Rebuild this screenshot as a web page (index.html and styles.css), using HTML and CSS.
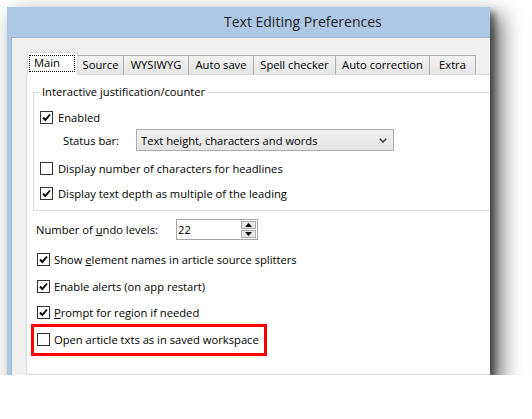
FILE: index.html
```html
<!DOCTYPE html>
<html>
<head>
<meta charset="utf-8">
<title>Text Editing Preferences</title>
<link rel="stylesheet" href="styles.css">
</head>
<body>
<div class="window">
  <div class="titlebar">Text Editing Preferences</div>
  <div class="client">
    <div class="tabs">
      <div class="tab tab-main"><span class="focus">Main</span></div>
      <div class="tab tab-source">Source</div>
      <div class="tab tab-wysiwyg">WYSIWYG</div>
      <div class="tab tab-autosave">Auto save</div>
      <div class="tab tab-spell">Spell checker</div>
      <div class="tab tab-autocorr">Auto correction</div>
      <div class="tab tab-extra">Extra</div>
    </div>
    <div class="panel">
      <fieldset class="group">
        <legend>Interactive justification/counter</legend>
        <div class="check row-enabled">
          <span class="box"><svg viewBox="0 0 11 11" width="11" height="11"><path d="M2 5.5 L4.3 8 L9 2.5" fill="none" stroke="#000" stroke-width="1.9"/></svg></span>
          <span>Enabled</span>
        </div>
        <div class="status-row">
          <span class="status-label">Status bar:</span>
          <div class="select">
            <span class="select-text">Text height, characters and words</span>
            <svg class="chevron" viewBox="0 0 8 5" width="8" height="5"><path d="M0.8 0.8 L4 4 L7.2 0.8" fill="none" stroke="#444" stroke-width="1.6"/></svg>
          </div>
        </div>
        <div class="check row-headlines">
          <span class="box"></span>
          <span>Display number of characters for headlines</span>
        </div>
        <div class="check row-depth">
          <span class="box"><svg viewBox="0 0 11 11" width="11" height="11"><path d="M2 5.5 L4.3 8 L9 2.5" fill="none" stroke="#000" stroke-width="1.9"/></svg></span>
          <span>Display text depth as multiple of the leading</span>
        </div>
      </fieldset>

      <div class="undo-row">
        <span class="undo-label">Number of <u>u</u>ndo levels:</span>
        <div class="spin">
          <span class="spin-value">22</span>
          <div class="spin-buttons">
            <span class="spin-btn"><svg viewBox="0 0 7 4" width="7" height="4"><path d="M0 4 L3.5 0 L7 4 Z" fill="#000"/></svg></span>
            <span class="spin-btn"><svg viewBox="0 0 7 4" width="7" height="4"><path d="M0 0 L3.5 4 L7 0 Z" fill="#000"/></svg></span>
          </div>
        </div>
      </div>

      <div class="check check-outer row-element">
        <span class="box"><svg viewBox="0 0 11 11" width="11" height="11"><path d="M2 5.5 L4.3 8 L9 2.5" fill="none" stroke="#000" stroke-width="1.9"/></svg></span>
        <span>Show <u>e</u>lement names in article source splitters</span>
      </div>
      <div class="check check-outer row-alerts">
        <span class="box"><svg viewBox="0 0 11 11" width="11" height="11"><path d="M2 5.5 L4.3 8 L9 2.5" fill="none" stroke="#000" stroke-width="1.9"/></svg></span>
        <span>Enable alerts (on app restart)</span>
      </div>
      <div class="check check-outer row-prompt">
        <span class="box"><svg viewBox="0 0 11 11" width="11" height="11"><path d="M2 5.5 L4.3 8 L9 2.5" fill="none" stroke="#000" stroke-width="1.9"/></svg></span>
        <span><u>P</u>rompt for region if needed</span>
      </div>
      <div class="highlight">
        <div class="check check-inner">
          <span class="box"></span>
          <span>Open article txts as in saved workspace</span>
        </div>
      </div>
    </div>
  </div>
</div>
</body>
</html>
```

FILE: styles.css
```css
body {
  margin: 0;
  background: #ffffff;
  font-family: "Open Sans", "Segoe UI", sans-serif;
  font-size: 11.2px;
  color: #000;
}

.window {
  margin: 7px 0 0 7px;
  width: 483px;
  height: 368px;
  overflow: hidden;
  background: #aec9e6;
  box-shadow: 5px 5px 6px rgba(0, 0, 0, 0.45), 10px 10px 20px 2px rgba(0, 0, 0, 0.55);
  display: flex;
  flex-direction: column;
}

.titlebar {
  flex: none;
  height: 30px;
  line-height: 30px;
  padding-left: 217px;
  font-size: 14px;
  color: #222;
  white-space: nowrap;
}

.client {
  flex: 1;
  min-height: 0;
  margin-left: 4px;
  margin-right: -80px;
  background: #f0f0f0;
  border-top: 1px solid #9fb8d3;
  border-left: 1px solid #9fb8d3;
  padding: 14px 0 0 14px;
  display: flex;
  flex-direction: column;
}

.tabs {
  display: flex;
  align-items: flex-end;
  margin-left: 1px;
  flex: none;
}

.tab {
  box-sizing: border-box;
  height: 19px;
  border: 1px solid #acacac;
  border-bottom: none;
  margin-right: -1px;
  background: linear-gradient(#f2f2f2, #e6e6e6);
  text-align: center;
  line-height: 18px;
  white-space: nowrap;
}

.tab-main {
  height: 23px;
  margin-bottom: -1px;
  background: #ffffff;
  border-color: #d9d9d9;
  position: relative;
  z-index: 1;
  padding: 2px 0 0 1px;
  text-align: left;
  width: 51px;
}

.tab-source { width: 47px; }
.tab-wysiwyg { width: 66px; }
.tab-autosave { width: 66px; }
.tab-spell { width: 83px; }
.tab-autocorr { width: 95px; }
.tab-extra { width: 47px; }

.focus {
  display: block;
  box-sizing: border-box;
  width: 46px;
  height: 17px;
  border: 1px dotted #000;
  line-height: 14px;
  padding-left: 4px;
}

.panel {
  flex: 1;
  box-sizing: border-box;
  background: #ffffff;
  border: 1px solid #d9d9d9;
  border-right: none;
}

.group {
  margin: 9px 0 0 6px;
  padding: 0 0 8px 6px;
  border: 1px solid #dcdcdc;
  border-right: none;
  min-width: 0;
}

.group legend {
  padding: 0 2px;
  line-height: 16px;
}

.check {
  display: flex;
  align-items: center;
  height: 18px;
  white-space: nowrap;
}

.box {
  box-sizing: border-box;
  width: 13px;
  height: 13px;
  border: 1px solid #333;
  background: #fff;
  margin-right: 5px;
  display: flex;
  align-items: center;
  justify-content: center;
  flex: none;
}

.box svg { display: block; }

.row-enabled { margin-top: 8px; }

.status-row {
  display: flex;
  align-items: center;
  height: 22px;
  margin-top: 3px;
}

.status-label {
  margin-left: 23px;
  width: 73px;
}

.select {
  box-sizing: border-box;
  width: 258px;
  height: 22px;
  border: 1px solid #acacac;
  background: linear-gradient(#f0f0f0, #e5e5e5);
  display: flex;
  align-items: center;
  padding: 0 6px 0 4px;
}

.select-text { flex: 1; }

.chevron { display: block; margin-top: 1px; }

.row-headlines { margin-top: 8px; }
.row-depth { margin-top: 7px; }

.undo-row {
  display: flex;
  align-items: center;
  height: 21px;
  margin: 8px 0 0 9px;
}

.undo-label { width: 140px; }

.spin {
  box-sizing: border-box;
  width: 82px;
  height: 21px;
  border: 1px solid #a5a5a5;
  display: flex;
  align-items: center;
  padding-left: 1px;
}

.spin-value { flex: 1; }

.spin-buttons {
  display: flex;
  flex-direction: column;
  gap: 1px;
  margin-right: 1px;
}

.spin-btn {
  box-sizing: border-box;
  width: 15px;
  height: 8px;
  border: 1px solid #acacac;
  background: #e8e8e8;
  display: flex;
  align-items: center;
  justify-content: center;
}

.spin-btn svg { display: block; }

.check-outer { margin-left: 10px; }
.check-outer .box { margin-right: 4px; }

.row-element { margin-top: 10px; }
.row-alerts { margin-top: 9px; }
.row-prompt { margin-top: 8px; }

.highlight {
  width: fit-content;
  margin: 3px 0 0 4px;
  border: 3px solid #ff0000;
  padding: 3px 5px 5px 3px;
}

.check-inner .box { margin-right: 4px; }
```
